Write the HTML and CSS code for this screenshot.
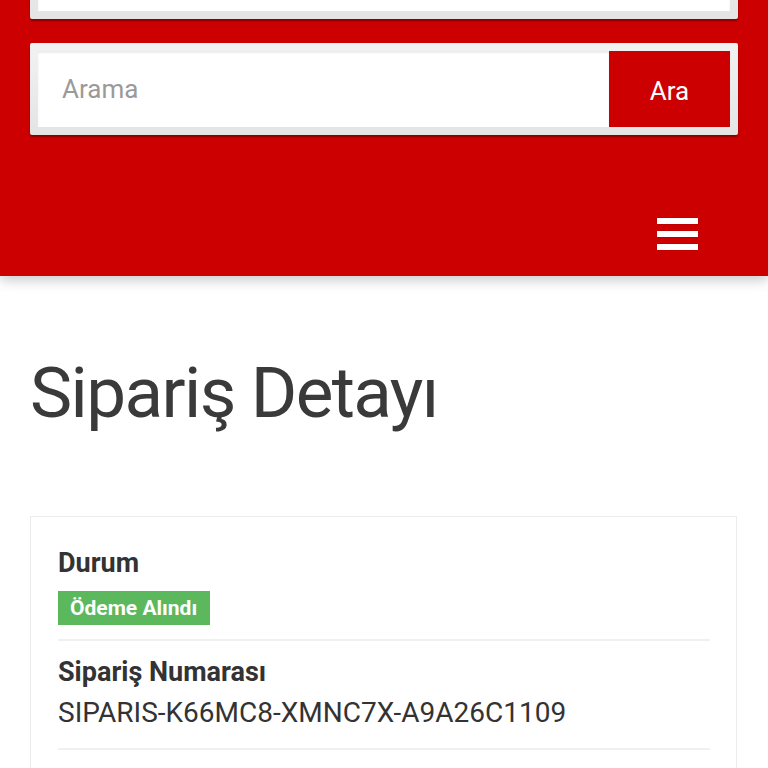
FILE: index.html
```html
<!DOCTYPE html>
<html lang="tr">
<head>
    <meta charset="UTF-8">
    <meta name="viewport" content="width=device-width, initial-scale=1.0">
    <title>Sipariş Detayı</title>
    <link rel="stylesheet" href="styles.css">
</head>
<body>

    <header class="site-header">
        <!-- Ustteki kutu (sayfa kaydirilmis) -->
        <div class="search-box">
            <input class="search-input" type="text" placeholder="">
        </div>

        <form class="search-box search-main" onsubmit="return false;">
            <input class="search-input" type="text" placeholder="Arama">
            <button class="search-button" type="submit">Ara</button>
        </form>

        <div class="nav-row">
            <button class="menu-toggle" type="button" aria-label="Menü">
                <span></span>
                <span></span>
                <span></span>
            </button>
        </div>
    </header>

    <main class="page">
        <h1 class="page-title">Sipariş Detayı</h1>

        <div class="order-card">
            <div class="order-row">
                <div class="order-label">Durum</div>
                <span class="badge-success">Ödeme Alındı</span>
            </div>
            <div class="order-row">
                <div class="order-label">Sipariş Numarası</div>
                <div class="order-value">SIPARIS-K66MC8-XMNC7X-A9A26C1109</div>
            </div>
        </div>
    </main>

</body>
</html>
```

FILE: styles.css
```css
body {
    margin: 0;
    font-family: Roboto, "Liberation Sans", Arial, sans-serif;
    color: #333;
    background: #fff;
}

.site-header {
    background-color: #cc0000;
    margin-top: -73px;
    padding: 0 30px;
    box-shadow: 0 4px 12px rgba(0, 0, 0, 0.22);
}

.search-box {
    display: flex;
    height: 76px;
    padding: 8px;
    background: linear-gradient(#f2f2f2, #e4e4e4);
    border-radius: 2px;
    box-shadow: 0 2px 2px rgba(0, 0, 0, 0.35);
}
.search-main {
    margin: 24px 0 0;
}
.search-input {
    flex: 1;
    min-width: 0;
    border: none;
    outline: none;
    padding: 0 24px;
    font-family: inherit;
    font-size: 26px;
    color: #333;
    background: #fff;
    box-shadow: inset 0 2px 2px rgba(0, 0, 0, 0.08);
}
.search-input::placeholder {
    color: #9a9a9a;
}
.search-button {
    width: 121px;
    padding: 4px 0 0;
    border: none;
    background-color: #cc0000;
    color: #fff;
    font-family: inherit;
    font-size: 26px;
    cursor: pointer;
}

.nav-row {
    display: flex;
    justify-content: flex-end;
    padding: 83px 40px 26px 0;
}
.menu-toggle {
    display: flex;
    flex-direction: column;
    gap: 7px;
    padding: 0;
    border: none;
    background: none;
    cursor: pointer;
}
.menu-toggle span {
    display: block;
    width: 41px;
    height: 6px;
    background: #fff;
    box-shadow: 0 0 1px rgba(0, 0, 0, 0.4);
}

.page {
    padding: 0 31px 0 30px;
}
.page-title {
    margin: 74px 0 81px 0;
    font-size: 71px;
    font-weight: 400;
    line-height: 1.2;
    letter-spacing: -1.6px;
    color: #3a3a3a;
}

.order-card {
    border: 1px solid #ececec;
    padding: 28px 26px 60px 27px;
}
.order-row {
    padding: 13px 0 17px;
    border-bottom: 2px solid #f0f0f0;
}
.order-row:first-child {
    padding-top: 0;
    padding-bottom: 14px;
}
.order-label {
    font-size: 27px;
    font-weight: 700;
    line-height: 36px;
    color: #333;
}
.order-value {
    margin-top: 5px;
    font-size: 28px;
    line-height: 36px;
    color: #333;
}
.badge-success {
    display: inline-block;
    margin-top: 10px;
    padding: 0 13px 0 12px;
    height: 34px;
    line-height: 34px;
    font-size: 21px;
    font-weight: 700;
    color: #fff;
    background-color: #5cb85c;
}
```
